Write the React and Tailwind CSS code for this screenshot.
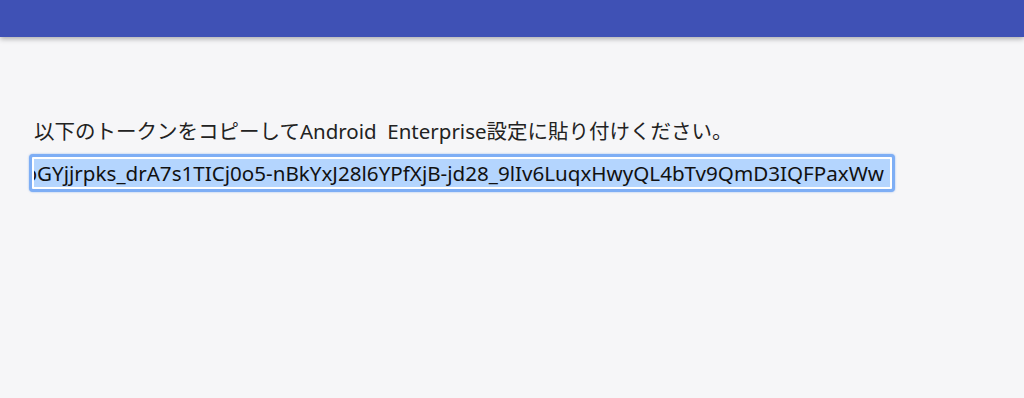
import React from 'react';

const TOKEN =
  'EAAQRLGAbGYjjrpks_drA7s1TICj0o5-nBkYxJ28l6YPfXjB-jd28_9lIv6LuqxHwyQL4bTv9QmD3IQFPaxWw';

const App = () => {
  return (
    <div className="min-h-screen w-full bg-[#f6f6f8]" style={{ fontFamily: '"Noto Sans", "Noto Sans CJK JP", sans-serif' }}>
      {/* ヘッダー */}
      <header className="h-[37px] w-full bg-[#3f51b5] shadow-[0_2px_5px_rgba(0,0,0,0.3)]"></header>

      <main className="pl-[29px] pt-[80px]">
        <p className="whitespace-pre pl-[5px] text-[20.5px] leading-[28px] text-[#222]">
          以下のトークンをコピーしてAndroid  Enterprise設定に貼り付けください。
        </p>

        {/* 選択状態のトークン入力欄 */}
        <div className="mt-[9px] w-[866px] rounded-[4px] border-[3px] border-[#7eaef5] bg-white p-[2px] shadow-[0_0_2px_rgba(80,140,230,0.6)]">
          <div className="flex h-[28px] justify-end overflow-hidden">
            <span className="shrink-0 whitespace-pre bg-[#b4d5fe] pr-[6px] text-[20.6px] leading-[28px] text-[#111]">
              {TOKEN}
            </span>
          </div>
        </div>
      </main>
    </div>
  );
};

export default App;
